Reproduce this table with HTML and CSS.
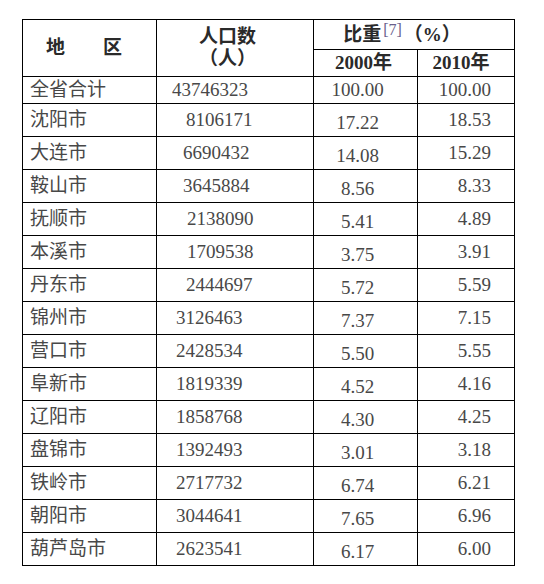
FILE: index.html
```html
<!DOCTYPE html>
<html lang="zh-CN">
<head>
<meta charset="utf-8">
<title>辽宁省各市人口</title>
<link rel="stylesheet" href="styles.css">
</head>
<body>
<table class="pop">
  <colgroup>
    <col class="w-name">
    <col class="w-num">
    <col class="w-y1">
    <col class="w-y2">
  </colgroup>
  <thead>
    <tr class="h1">
      <th rowspan="2" class="h-name">地　　区</th>
      <th rowspan="2" class="h-num">人口数<br>（人）</th>
      <th colspan="2" class="h-share">比重<sup class="note">[7]</sup>（%）</th>
    </tr>
    <tr class="h2">
      <th class="h-y1">2000年</th>
      <th class="h-y2">2010年</th>
    </tr>
  </thead>
  <tbody>
    <tr class="first"><td class="name">全省合计</td><td class="num p15">43746323</td><td class="y1">100.00</td><td class="y2">100.00</td></tr>
    <tr><td class="name">沈阳市</td><td class="num p29">8106171</td><td class="y1">17.22</td><td class="y2">18.53</td></tr>
    <tr><td class="name">大连市</td><td class="num p26">6690432</td><td class="y1">14.08</td><td class="y2">15.29</td></tr>
    <tr><td class="name">鞍山市</td><td class="num p26">3645884</td><td class="y1">8.56</td><td class="y2">8.33</td></tr>
    <tr><td class="name">抚顺市</td><td class="num p30">2138090</td><td class="y1">5.41</td><td class="y2">4.89</td></tr>
    <tr><td class="name">本溪市</td><td class="num p30">1709538</td><td class="y1">3.75</td><td class="y2">3.91</td></tr>
    <tr><td class="name">丹东市</td><td class="num p29">2444697</td><td class="y1">5.72</td><td class="y2">5.59</td></tr>
    <tr><td class="name">锦州市</td><td class="num">3126463</td><td class="y1">7.37</td><td class="y2">7.15</td></tr>
    <tr><td class="name">营口市</td><td class="num">2428534</td><td class="y1">5.50</td><td class="y2">5.55</td></tr>
    <tr><td class="name">阜新市</td><td class="num">1819339</td><td class="y1">4.52</td><td class="y2">4.16</td></tr>
    <tr><td class="name">辽阳市</td><td class="num">1858768</td><td class="y1">4.30</td><td class="y2">4.25</td></tr>
    <tr><td class="name">盘锦市</td><td class="num">1392493</td><td class="y1">3.01</td><td class="y2">3.18</td></tr>
    <tr><td class="name">铁岭市</td><td class="num">2717732</td><td class="y1">6.74</td><td class="y2">6.21</td></tr>
    <tr><td class="name">朝阳市</td><td class="num">3044641</td><td class="y1">7.65</td><td class="y2">6.96</td></tr>
    <tr><td class="name">葫芦岛市</td><td class="num">2623541</td><td class="y1">6.17</td><td class="y2">6.00</td></tr>
  </tbody>
</table>
</body>
</html>
```
FILE: styles.css
```css
html, body {
  margin: 0;
  background: #ffffff;
}

body {
  padding: 19px 0 0 22px;
  font-family: "Liberation Serif", "Noto Sans CJK SC", serif;
  font-size: 19px;
  color: #484848;
}

.pop {
  border-collapse: collapse;
  table-layout: fixed;
  width: 492px;
}

.w-name { width: 134px; }
.w-num { width: 157px; }
.w-y1 { width: 104px; }
.w-y2 { width: 97px; }

.pop th,
.pop td {
  border: 1px solid #000;
  padding: 0;
  white-space: nowrap;
  vertical-align: middle;
  line-height: 22px;
}

.pop th {
  font-weight: bold;
  color: #2a2a2a;
}

.pop .h1 { height: 30px; }
.pop .h2 { height: 27px; }

.pop .h-name {
  text-align: left;
  padding-left: 23px;
  font-weight: 600;
}

.pop .h-num {
  text-align: center;
  padding-right: 15px;
}

.pop .h-share {
  text-align: center;
  padding-right: 24px;
}

.pop .note {
  font-weight: normal;
  font-size: 16px;
  color: #6a5f8c;
  vertical-align: 6px;
  line-height: 0;
  margin: 0 2px 0 2px;
}

.pop .h-y1 {
  text-align: center;
  padding-right: 4px;
}

.pop .h-y2 {
  text-align: center;
  padding-right: 10px;
}

.pop tbody tr { height: 33px; }
.pop tbody tr.first { height: 27px; }

.pop .name {
  padding-left: 7px;
}

.pop .num { padding-left: 19px; }
.pop .num.p15 { padding-left: 15px; }
.pop .num.p26 { padding-left: 26px; }
.pop .num.p29 { padding-left: 29px; }
.pop .num.p30 { padding-left: 30px; }

.pop .y1 {
  text-align: center;
  padding-right: 16px;
  padding-top: 6px;
}

.pop .first .y1 { padding-top: 0; }

.pop .y2 {
  text-align: right;
  padding-right: 23px;
}
```
